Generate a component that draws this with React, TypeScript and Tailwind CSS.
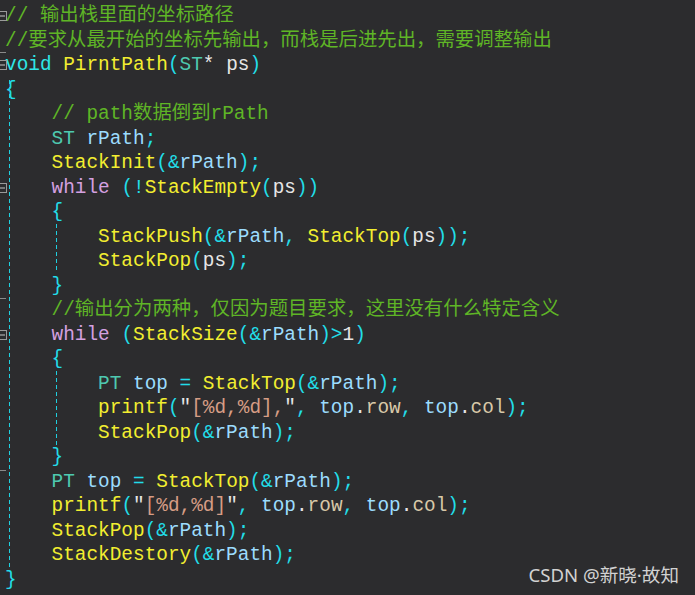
import React from "react";

type Kind = "cm" | "kw" | "kv" | "fn" | "p" | "ty" | "v" | "w" | "s" | "m" | "sp";
type Tok = [Kind, string];
type Mark = "fold" | "tick" | "none";

const cls: Record<Kind, string> = {
  cm: "text-[#5fb526]",
  kw: "text-[#d4a0e0]",
  kv: "text-[#2ee6e6]",
  fn: "text-[#f2ee30]",
  p: "text-[#22dde8]",
  ty: "text-[#4ec9b0]",
  v: "text-[#9cdcfe]",
  w: "text-[#e6e6e6]",
  s: "text-[#d69d85]",
  m: "text-[#d8c8a8]",
  sp: "",
};

const I4 = "    ";
const I8 = "        ";

const lines: { mark: Mark; toks: Tok[] }[] = [
  { mark: "fold", toks: [["cm", "// 输出栈里面的坐标路径"]] },
  { mark: "none", toks: [["cm", "//要求从最开始的坐标先输出，而栈是后进先出，需要调整输出"]] },
  { mark: "fold", toks: [["kv", "void"], ["sp", " "], ["fn", "PirntPath"], ["p", "("], ["ty", "ST"], ["w", "*"], ["sp", " "], ["w", "ps"], ["p", ")"]] },
  { mark: "none", toks: [["p", "{"]] },
  { mark: "none", toks: [["sp", I4], ["cm", "// path数据倒到rPath"]] },
  { mark: "none", toks: [["sp", I4], ["ty", "ST"], ["sp", " "], ["v", "rPath"], ["p", ";"]] },
  { mark: "none", toks: [["sp", I4], ["fn", "StackInit"], ["p", "(&"], ["v", "rPath"], ["p", ");"]] },
  { mark: "fold", toks: [["sp", I4], ["kw", "while"], ["sp", " "], ["p", "(!"], ["fn", "StackEmpty"], ["p", "("], ["w", "ps"], ["p", "))"]] },
  { mark: "none", toks: [["sp", I4], ["p", "{"]] },
  { mark: "none", toks: [["sp", I8], ["fn", "StackPush"], ["p", "(&"], ["v", "rPath"], ["p", ", "], ["fn", "StackTop"], ["p", "("], ["w", "ps"], ["p", "));"]] },
  { mark: "none", toks: [["sp", I8], ["fn", "StackPop"], ["p", "("], ["w", "ps"], ["p", ");"]] },
  { mark: "tick", toks: [["sp", I4], ["p", "}"]] },
  { mark: "none", toks: [["sp", I4], ["cm", "//输出分为两种，仅因为题目要求，这里没有什么特定含义"]] },
  { mark: "fold", toks: [["sp", I4], ["kw", "while"], ["sp", " "], ["p", "("], ["fn", "StackSize"], ["p", "(&"], ["v", "rPath"], ["p", ")>"], ["w", "1"], ["p", ")"]] },
  { mark: "none", toks: [["sp", I4], ["p", "{"]] },
  { mark: "none", toks: [["sp", I8], ["ty", "PT"], ["sp", " "], ["v", "top"], ["p", " = "], ["fn", "StackTop"], ["p", "(&"], ["v", "rPath"], ["p", ");"]] },
  { mark: "none", toks: [["sp", I8], ["fn", "printf"], ["p", "("], ["w", "\""], ["s", "[%d,%d],"], ["w", "\""], ["p", ", "], ["v", "top"], ["w", "."], ["m", "row"], ["p", ", "], ["v", "top"], ["w", "."], ["m", "col"], ["p", ");"]] },
  { mark: "none", toks: [["sp", I8], ["fn", "StackPop"], ["p", "(&"], ["v", "rPath"], ["p", ");"]] },
  { mark: "tick", toks: [["sp", I4], ["p", "}"]] },
  { mark: "none", toks: [["sp", I4], ["ty", "PT"], ["sp", " "], ["v", "top"], ["p", " = "], ["fn", "StackTop"], ["p", "(&"], ["v", "rPath"], ["p", ");"]] },
  { mark: "none", toks: [["sp", I4], ["fn", "printf"], ["p", "("], ["w", "\""], ["s", "[%d,%d]"], ["w", "\""], ["p", ", "], ["v", "top"], ["w", "."], ["m", "row"], ["p", ", "], ["v", "top"], ["w", "."], ["m", "col"], ["p", ");"]] },
  { mark: "none", toks: [["sp", I4], ["fn", "StackPop"], ["p", "(&"], ["v", "rPath"], ["p", ");"]] },
  { mark: "none", toks: [["sp", I4], ["fn", "StackDestory"], ["p", "(&"], ["v", "rPath"], ["p", ");"]] },
  { mark: "none", toks: [["p", "}"]] },
];

function Fold() {
  return (
    <svg className="absolute left-0 top-[7px]" width="8" height="10" viewBox="0 0 8 10">
      <rect x="-3.5" y="0.5" width="10" height="9" fill="none" stroke="#9a9a9a" strokeWidth="1" />
      <line x1="0" y1="5" x2="5" y2="5" stroke="#c8c8c8" strokeWidth="1" />
    </svg>
  );
}

const dash =
  "bg-[repeating-linear-gradient(to_bottom,#1fd0e0_0px,#1fd0e0_4px,transparent_4px,transparent_7px)]";

export default function App() {
  return (
    <div className="relative w-[695px] h-[595px] overflow-hidden bg-[#2c2c2e]">
      <div
        className="flex flex-col pt-[4px] text-[19.4px] leading-[24.5px] whitespace-pre"
        style={{ fontFamily: "'Liberation Mono', 'Noto Sans CJK SC', monospace" }}
      >
        {lines.map((ln, i) => (
          <div key={i} className="relative flex h-[24.5px] pl-[5px]">
            {ln.mark === "fold" && <Fold />}
            {ln.mark === "tick" && <div className="absolute left-0 bottom-[-1px] h-px w-[6px] bg-[#8a8a8a]" />}
            {ln.toks.map(([k, t], j) => (
              <span key={j} className={cls[k]}>
                {t}
              </span>
            ))}
          </div>
        ))}
      </div>

      {/* tick below the header comment block */}
      <div className="absolute left-0 top-[52px] h-px w-[6px] bg-[#8a8a8a]" />

      {/* indent guides */}
      <div className={`absolute left-[9px] top-[80px] w-px h-[492px] ${dash}`} />
      <div className={`absolute left-[56px] top-[224px] w-px h-[48px] ${dash}`} />
      <div className={`absolute left-[56px] top-[371px] w-px h-[76px] ${dash}`} />

      {/* watermark */}
      <div
        className="absolute right-[16px] bottom-[9px] text-[18.6px] leading-[22px] text-[#d2d2d2]"
        style={{ fontFamily: "'Noto Sans', 'Noto Sans CJK SC', sans-serif" }}
      >
        CSDN @新晓·故知
      </div>
    </div>
  );
}
